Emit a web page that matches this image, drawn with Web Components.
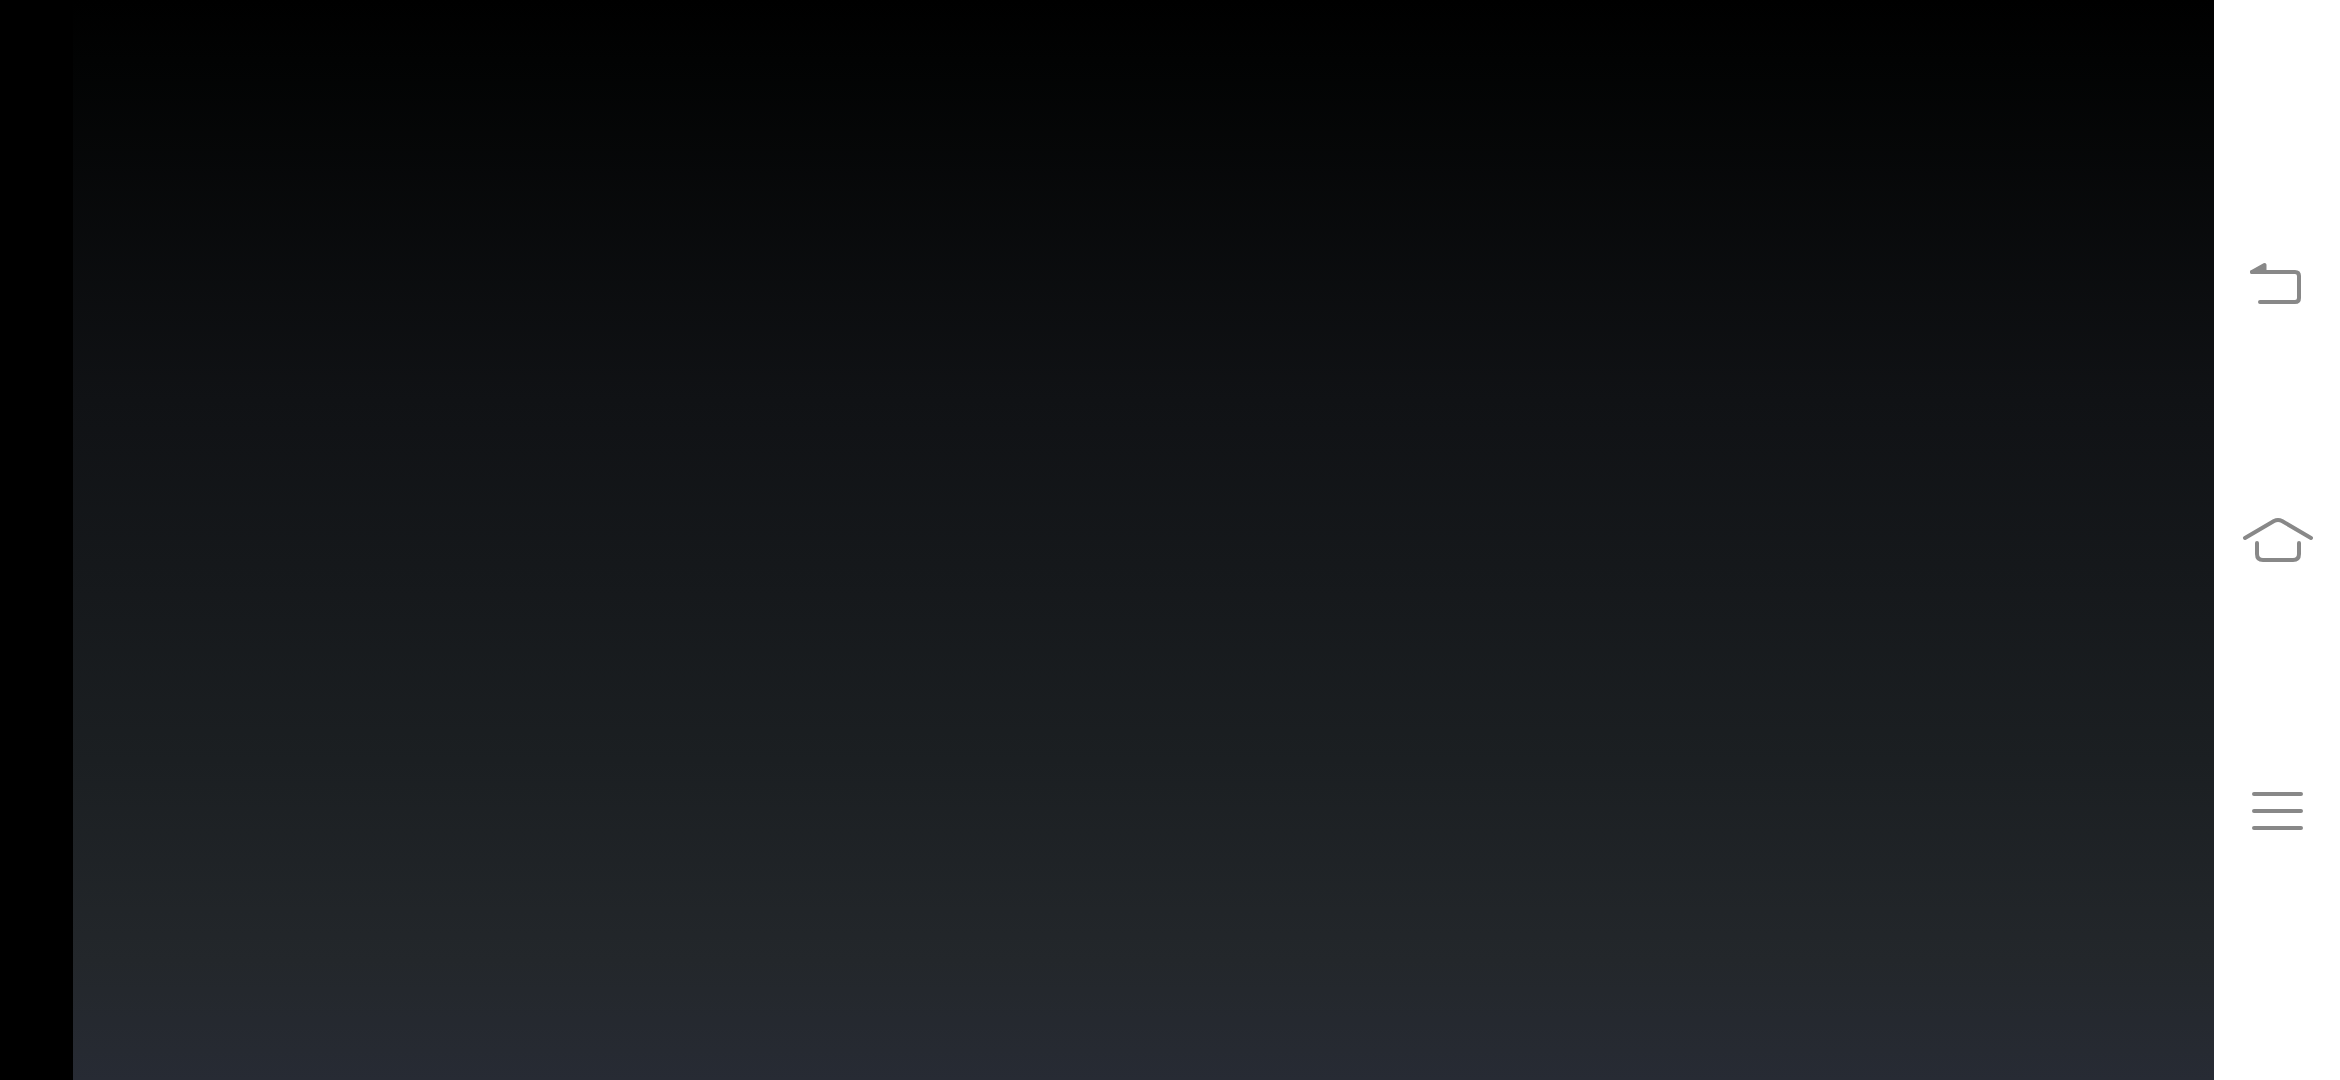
<!DOCTYPE html>
<html>
<head>
<meta charset="utf-8">
<title>Screen</title>
<style>
  html, body { margin: 0; height: 100%; background: #000; }
</style>
</head>
<body>
<app-screen>
  <nav-bar slot="nav">
    <nav-button icon="back" style="--after: 160px"></nav-button>
    <nav-button icon="home" style="--after: 170px"></nav-button>
    <nav-button icon="menu"></nav-button>
  </nav-bar>
</app-screen>

<script>
const ICONS = {
  // coordinates are px inside the 126x100 button
  back: `<path d="M38 41H81q4 0 4 4V67q0 4-4 4H46" fill="none"/>
         <path d="M38 41L50.5 34V41Z" stroke-width="2"/>`,
  home: `<path d="M31 47L60 30q4-2 8 0L97 47" fill="none"/>
         <path d="M43 52V63q0 6 6 6H79q6 0 6-6V52" fill="none"/>`,
  menu: `<path d="M40 33H87M40 50H87M40 67H87" fill="none"/>`,
};

class NavButton extends HTMLElement {
  connectedCallback() {
    if (this.shadowRoot) return;
    const name = this.getAttribute("icon");
    this.attachShadow({ mode: "open" });
    this.shadowRoot.innerHTML = `
      <style>
        :host {
          display: block;
          height: 100px;
          margin-bottom: var(--after, 0);
        }
        svg { display: block; width: 126px; height: 100px; }
        path {
          fill: #888;
          stroke: #888;
          stroke-width: 4;
          stroke-linecap: round;
          stroke-linejoin: round;
        }
        path[fill="none"] { fill: none; }
      </style>
      <svg viewBox="0 0 126 100" role="img" aria-label="${name}">${ICONS[name]}</svg>
    `;
  }
}
customElements.define("nav-button", NavButton);

class NavBar extends HTMLElement {
  constructor() {
    super();
    this.attachShadow({ mode: "open" });
    this.shadowRoot.innerHTML = `
      <style>
        :host {
          display: block;
          width: 126px;
          height: 100%;
          box-sizing: border-box;
          padding-top: 231px;
          background: #fff;
        }
      </style>
      <slot></slot>
    `;
  }
}
customElements.define("nav-bar", NavBar);

class AppScreen extends HTMLElement {
  constructor() {
    super();
    this.attachShadow({ mode: "open" });
    this.shadowRoot.innerHTML = `
      <style>
        :host {
          display: flex;
          width: 2340px;
          height: 1080px;
          background: #000;
        }
        .panel {
          flex: 1;
          margin-left: 73px;
          background: linear-gradient(180deg, #000 0, #020303 60px, #101215 400px, #1b1f22 760px, #23272b 960px, #272b34 1080px);
        }
      </style>
      <div class="panel"></div>
      <slot name="nav"></slot>
    `;
  }
}
customElements.define("app-screen", AppScreen);
</script>
</body>
</html>
